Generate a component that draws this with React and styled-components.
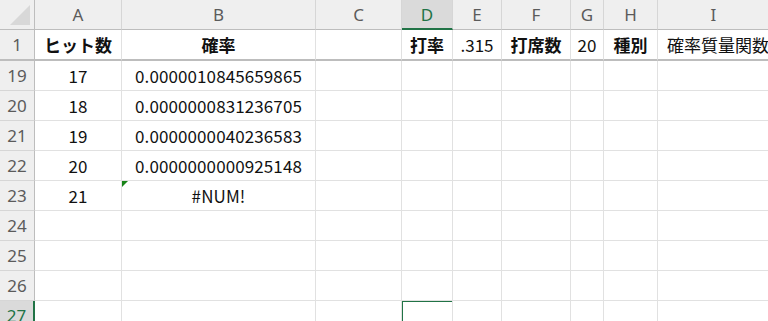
import styled, { createGlobalStyle, css } from "styled-components";

const GlobalStyle = createGlobalStyle`
  html, body {
    margin: 0;
    padding: 0;
    background: #fff;
    overflow: hidden;
  }
  body {
    font-family: "Noto Sans CJK JP", "Noto Sans", sans-serif;
  }
`;

const green = "#217346";

const columns = [
  { name: "A", width: 87 },
  { name: "B", width: 194 },
  { name: "C", width: 86 },
  { name: "D", width: 51, active: true },
  { name: "E", width: 49 },
  { name: "F", width: 69 },
  { name: "G", width: 33 },
  { name: "H", width: 54 },
  { name: "I", width: null },
];

const rows = [
  { num: 19, a: "17", b: "0.0000010845659865" },
  { num: 20, a: "18", b: "0.0000000831236705" },
  { num: 21, a: "19", b: "0.0000000040236583" },
  { num: 22, a: "20", b: "0.0000000000925148" },
  { num: 23, a: "21", b: "#NUM!", flag: true },
  { num: 24 },
  { num: 25 },
  { num: 26 },
  { num: 27, active: true },
];

const Sheet = styled.div`
  display: grid;
  grid-template-columns: 35px ${columns.map((c) => (c.width ? c.width + "px" : "1fr")).join(" ")};
  grid-template-rows: 30px 31px repeat(${rows.length}, 30px);
  width: 768px;
  height: 321px;
  overflow: hidden;
  font-size: 17px;
  color: #111;
`;

const Corner = styled.div`
  position: relative;
  background: #efefef;
  border-right: 1px solid #bdbdbd;
  border-bottom: 1px solid #bdbdbd;
  &::after {
    content: "";
    position: absolute;
    right: 4px;
    bottom: 4px;
    width: 0;
    height: 0;
    border-left: 20px solid transparent;
    border-bottom: 20px solid #d8d8d8;
  }
`;

const ColHead = styled.div`
  display: flex;
  align-items: center;
  justify-content: center;
  background: #efefef;
  color: #5b5b5b;
  font-family: "Noto Sans", "Liberation Sans", sans-serif;
  font-size: 17px;
  border-right: 1px solid #d6d6d6;
  border-bottom: 1px solid #bdbdbd;
  ${(p) =>
    p.$active &&
    css`
      background: #dadada;
      color: ${green};
      border-bottom: 2px solid ${green};
      padding-top: 1px;
    `}
`;

const RowHead = styled.div`
  display: flex;
  align-items: center;
  justify-content: center;
  background: #efefef;
  color: #5b5b5b;
  font-family: "Noto Sans", "Liberation Sans", sans-serif;
  font-size: 17px;
  border-right: 1px solid #bdbdbd;
  border-bottom: 1px solid ${(p) => (p.$frozen ? "#bdbdbd" : "#d6d6d6")};
  ${(p) => p.$frozen && "border-bottom-width: 2px;"}
  ${(p) =>
    p.$active &&
    css`
      background: #dadada;
      color: ${green};
      border-right: 2px solid ${green};
    `}
`;

const Cell = styled.div`
  position: relative;
  display: flex;
  align-items: center;
  justify-content: ${(p) => (p.$left ? "flex-start" : "center")};
  padding-left: ${(p) => (p.$left ? "9px" : "0")};
  white-space: nowrap;
  overflow: ${(p) => (p.$left ? "visible" : "hidden")};
  font-weight: ${(p) => (p.$bold ? 700 : 400)};
  letter-spacing: ${(p) => (p.$num ? "0.1px" : "0")};
  border-right: 1px solid #e1e1e1;
  border-bottom: ${(p) => (p.$frozen ? "2px solid #bdbdbd" : "1px solid #e1e1e1")};
  ${(p) =>
    p.$flag &&
    css`
      &::before {
        content: "";
        position: absolute;
        left: 0;
        top: 0;
        width: 0;
        height: 0;
        border-top: 6px solid #188318;
        border-right: 6px solid transparent;
      }
    `}
  ${(p) =>
    p.$selected &&
    css`
      &::after {
        content: "";
        position: absolute;
        left: -1px;
        top: -1px;
        right: -2px;
        bottom: -2px;
        border: 2px solid ${green};
      }
    `}
`;

const headerRow = {
  A: { text: "ヒット数", bold: true },
  B: { text: "確率", bold: true },
  D: { text: "打率", bold: true },
  E: { text: ".315" },
  F: { text: "打席数", bold: true },
  G: { text: "20" },
  H: { text: "種別", bold: true },
  I: { text: "確率質量関数", left: true },
};

export default function App() {
  return (
    <>
      <GlobalStyle />
      <Sheet>
        <Corner />
        {columns.map((c) => (
          <ColHead key={c.name} $active={c.active}>
            {c.name}
          </ColHead>
        ))}

        <RowHead $frozen>1</RowHead>
        {columns.map((c) => {
          const h = headerRow[c.name] || {};
          return (
            <Cell key={c.name} $frozen $bold={h.bold} $left={h.left}>
              {h.text}
            </Cell>
          );
        })}

        {rows.map((r) => (
          <>
            <RowHead key={"h" + r.num} $active={r.active}>
              {r.num}
            </RowHead>
            {columns.map((c) => {
              let text = "";
              if (c.name === "A") text = r.a;
              if (c.name === "B") text = r.b;
              return (
                <Cell
                  key={r.num + c.name}
                  $num={c.name === "B"}
                  $flag={c.name === "B" && r.flag}
                  $selected={r.active && c.active}
                >
                  {text}
                </Cell>
              );
            })}
          </>
        ))}
      </Sheet>
    </>
  );
}
